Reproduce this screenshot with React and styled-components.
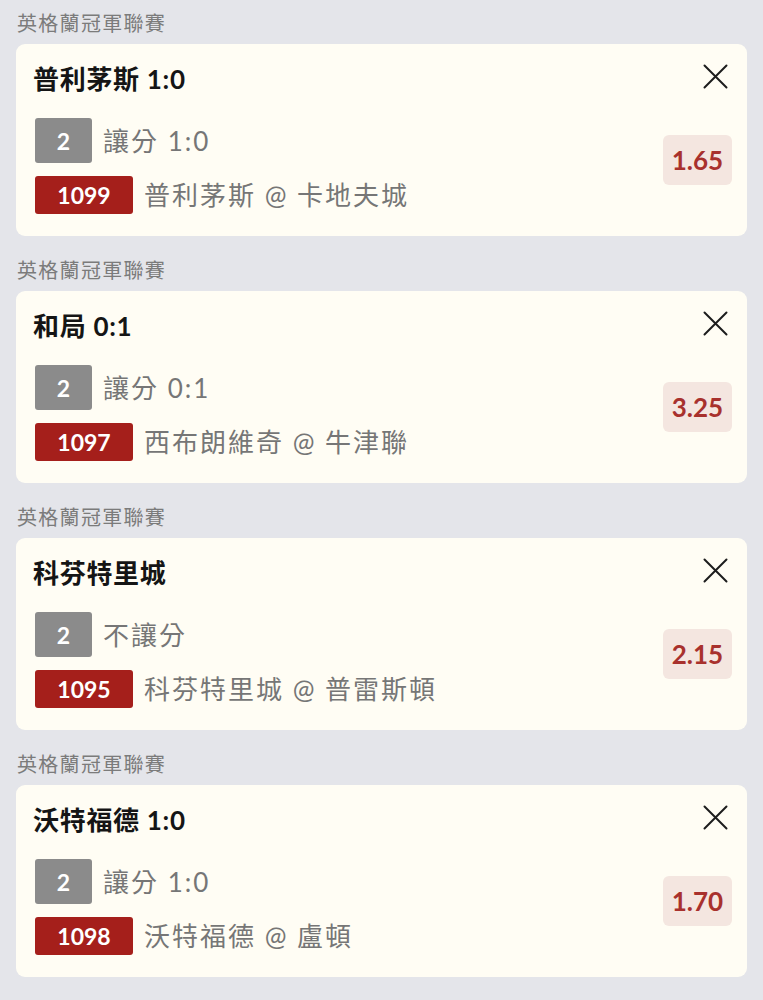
import React from "react";
import styled, { createGlobalStyle } from "styled-components";

const GlobalStyle = createGlobalStyle`
  html, body {
    margin: 0;
    padding: 0;
    background: #e4e5ea;
  }
  body {
    font-family: Lato, "Noto Sans CJK TC", "Noto Sans", sans-serif;
    -webkit-font-smoothing: antialiased;
  }
`;

const Page = styled.div`
  padding: 0 16px 12px 16px;
  display: flex;
  flex-direction: column;
  gap: 11px;
`;

const Section = styled.section`
  display: flex;
  flex-direction: column;
`;

const League = styled.div`
  height: 44px;
  display: flex;
  align-items: center;
  padding-left: 1px;
  font-size: 20px;
  color: #7b7b7b;
  letter-spacing: 1.3px;
`;

const Card = styled.div`
  background: #fffdf4;
  border-radius: 9px;
  padding: 16px 15px 22px 17px;
  display: grid;
  grid-template-columns: 1fr auto;
  grid-template-rows: auto auto;
  column-gap: 12px;
`;

const Title = styled.div`
  font-size: 26px;
  font-weight: 700;
  line-height: 38px;
  letter-spacing: 0.7px;
  color: #151515;
`;

const Close = styled.button`
  all: unset;
  justify-self: end;
  align-self: start;
  width: 26px;
  height: 26px;
  margin-top: 3px;
  margin-right: 4px;
  display: flex;
  align-items: center;
  justify-content: center;
  cursor: pointer;
`;

const Lines = styled.div`
  margin-top: 20px;
  margin-left: 2px;
  display: flex;
  flex-direction: column;
  gap: 13px;
`;

const Line = styled.div`
  display: flex;
  align-items: center;
  gap: ${(p) => p.$gap}px;
`;

const Badge = styled.div`
  width: ${(p) => p.$w}px;
  height: ${(p) => p.$h}px;
  border-radius: 3px;
  background: ${(p) => p.$bg};
  color: #fff;
  font-size: 23px;
  font-weight: 700;
  display: flex;
  align-items: center;
  justify-content: center;
  flex: none;
`;

const LineText = styled.div`
  font-size: 26px;
  color: #767676;
  line-height: 36px;
  letter-spacing: 2px;
  white-space: nowrap;
`;

const Odds = styled.div`
  align-self: start;
  margin-top: 37px;
  width: 69px;
  height: 50px;
  border-radius: 6px;
  background: #f4e6e0;
  color: #a8312d;
  font-size: 26px;
  font-weight: 700;
  display: flex;
  align-items: center;
  justify-content: center;
`;

const CloseIcon = () => (
  <svg width="25" height="25" viewBox="0 0 25 25" fill="none">
    <path d="M1.5 1.5 L23.5 23.5 M23.5 1.5 L1.5 23.5" stroke="#1c1c1c" strokeWidth="2" strokeLinecap="round" />
  </svg>
);

const bets = [
  { title: "普利茅斯 1:0", type: "讓分 1:0", code: "1099", match: "普利茅斯 @ 卡地夫城", odds: "1.65" },
  { title: "和局 0:1", type: "讓分 0:1", code: "1097", match: "西布朗維奇 @ 牛津聯", odds: "3.25" },
  { title: "科芬特里城", type: "不讓分", code: "1095", match: "科芬特里城 @ 普雷斯頓", odds: "2.15" },
  { title: "沃特福德 1:0", type: "讓分 1:0", code: "1098", match: "沃特福德 @ 盧頓", odds: "1.70" },
];

export default function App() {
  return (
    <>
      <GlobalStyle />
      <Page>
        {bets.map((b) => (
          <Section key={b.code}>
            <League>英格蘭冠軍聯賽</League>
            <Card>
              <Title>{b.title}</Title>
              <Close aria-label="close">
                <CloseIcon />
              </Close>
              <Lines>
                <Line $gap={11}>
                  <Badge $w={57} $h={45} $bg="#8b8b8b">2</Badge>
                  <LineText>{b.type}</LineText>
                </Line>
                <Line $gap={11}>
                  <Badge $w={98} $h={38} $bg="#a51f1b">{b.code}</Badge>
                  <LineText>{b.match}</LineText>
                </Line>
              </Lines>
              <Odds>{b.odds}</Odds>
            </Card>
          </Section>
        ))}
      </Page>
    </>
  );
}
